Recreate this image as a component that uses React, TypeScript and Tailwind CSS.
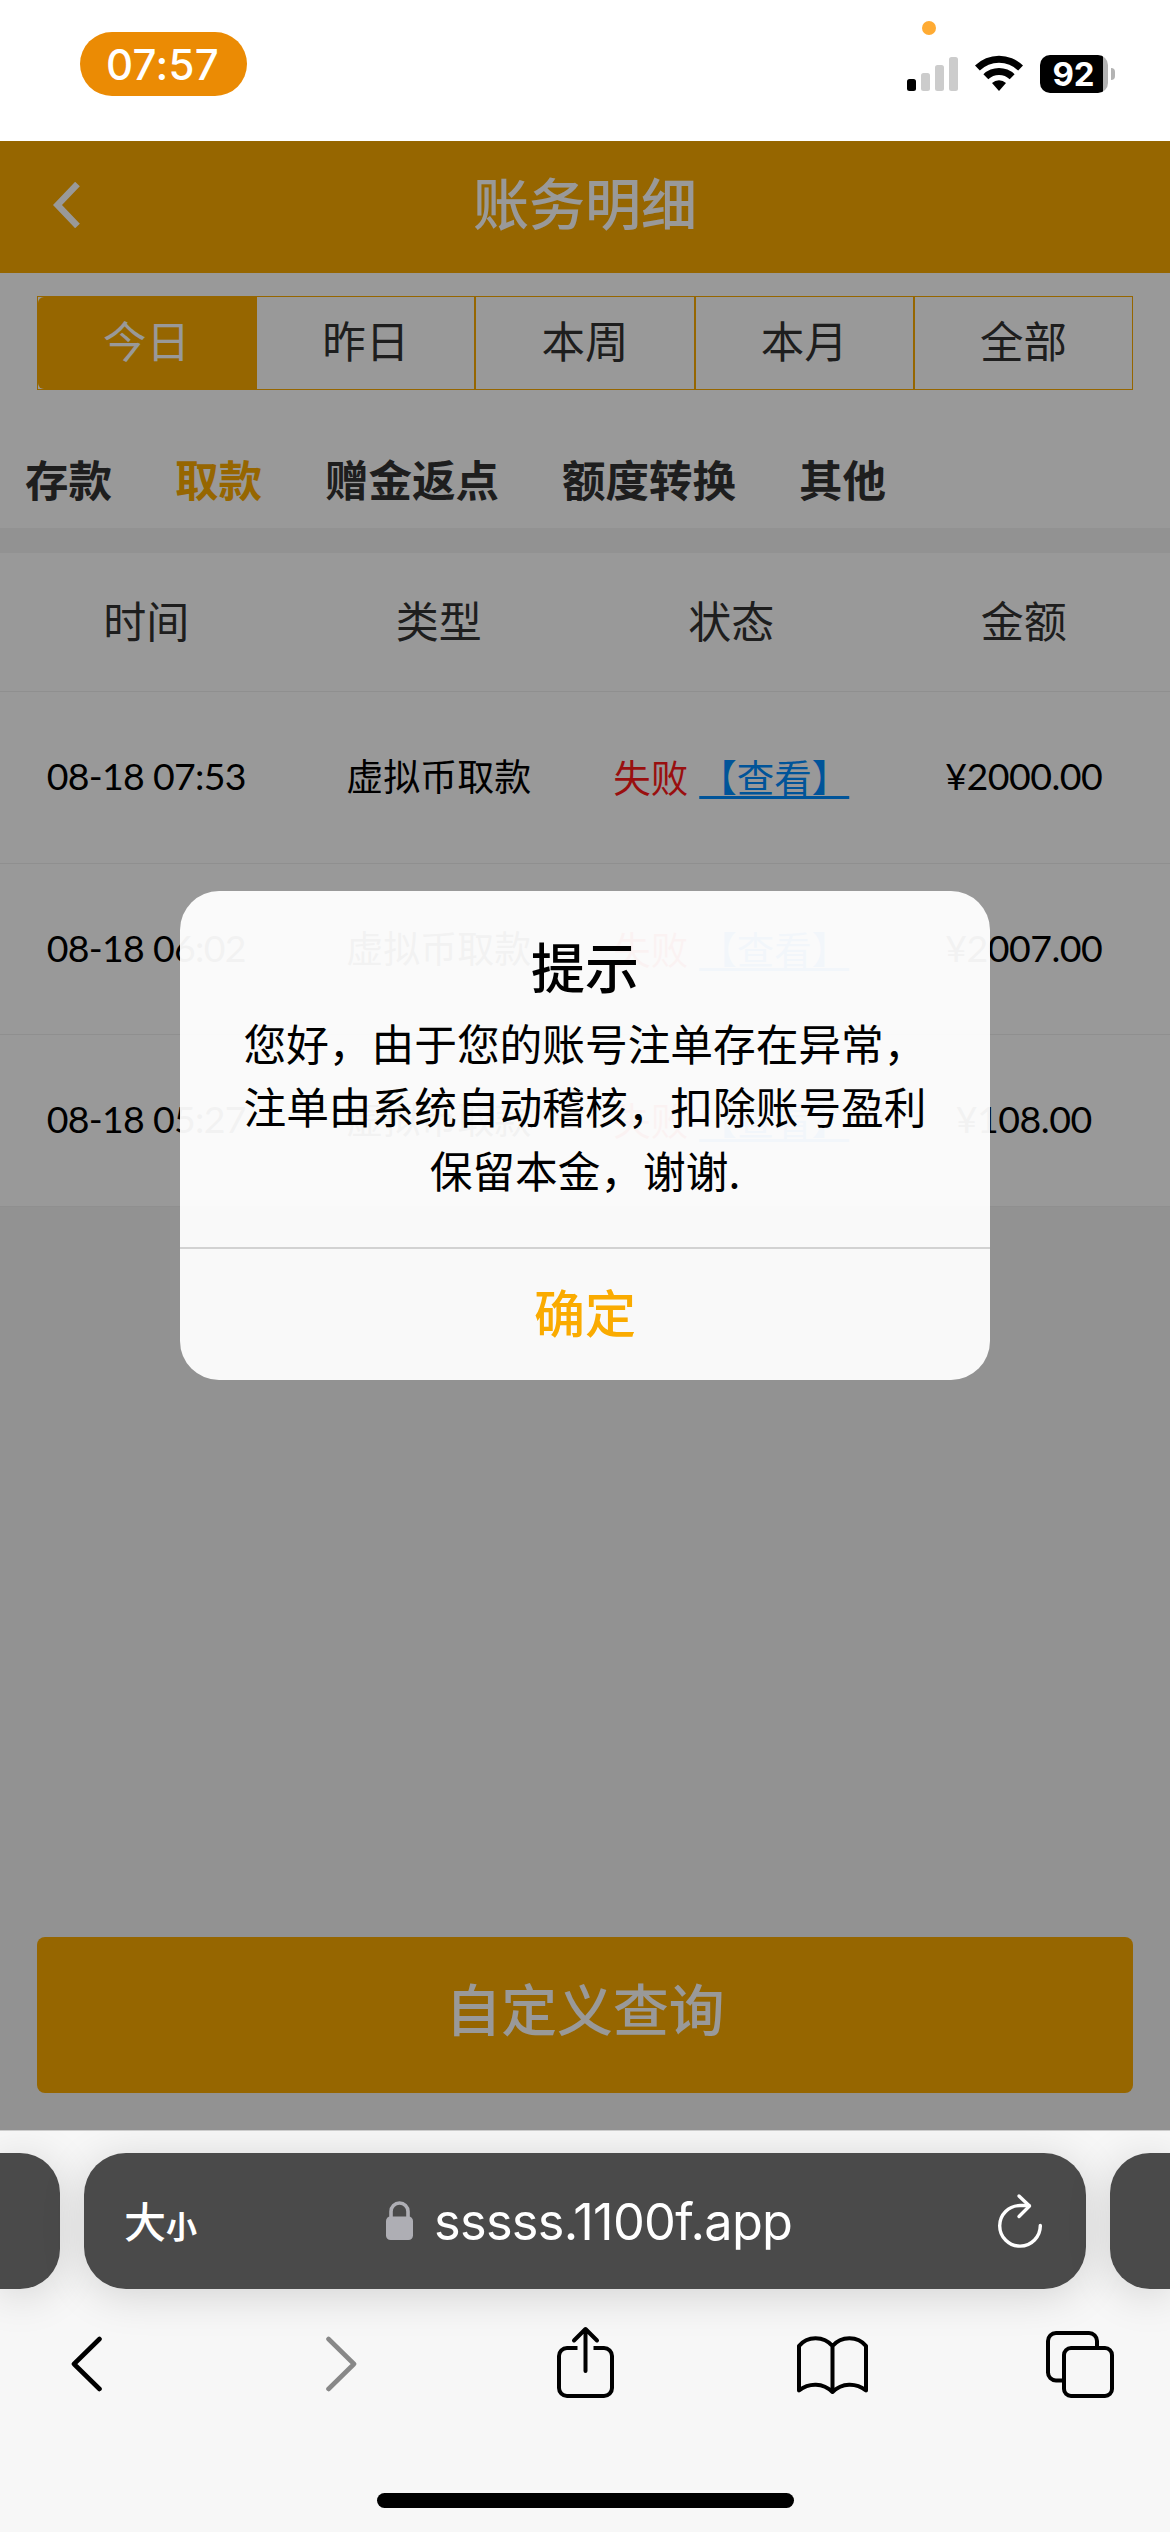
import type { ReactNode } from 'react'

const ranges = ['今日', '昨日', '本周', '本月', '全部']
const categories = ['存款', '取款', '赠金返点', '额度转换', '其他']
const columns = ['时间', '类型', '状态', '金额']

interface Record {
  time: string
  amount: string
}

const records: Record[] = [
  { time: '08-18 07:53', amount: '¥2000.00' },
  { time: '08-18 06:02', amount: '¥2007.00' },
  { time: '08-18 05:27', amount: '¥108.00' },
]

function StatusBar() {
  return (
    <div className="relative h-[141px] shrink-0 bg-white">
      <div className="flex items-start justify-between pl-20 pr-[55px] pt-8">
        <div className="flex h-16 w-[167px] items-center justify-center rounded-full bg-[#eb8b04] pr-[2px] font-['Inter'] text-[42px] font-medium tracking-[0.3px] text-white">
          07:57
        </div>
        <div className="flex items-start pt-[23px]">
          <svg width="51" height="36" viewBox="0 0 51 36" className="mr-[17px]">
            <rect x="0" y="24" width="9" height="12" rx="2.5" fill="#000" />
            <rect x="14" y="18" width="9" height="18" rx="2.5" fill="#ccc" />
            <rect x="28" y="10" width="9" height="26" rx="2.5" fill="#ccc" />
            <rect x="42" y="2" width="9" height="34" rx="2.5" fill="#ccc" />
          </svg>
          <svg width="48" height="36" viewBox="0 0 48 36" className="mr-[17px]">
            <path d="M0 10.6a34 34 0 0 1 48 0l-4.8 5a27.3 27.3 0 0 0-38.4 0z" />
            <path d="M8.4 19.3a22.3 22.3 0 0 1 31.2 0l-4.9 5a15.4 15.4 0 0 0-21.4 0z" />
            <path d="M17 28a10.3 10.3 0 0 1 14 0l-7 8z" />
          </svg>
          <div className="flex items-center">
            <div className="flex h-[38px] w-[68px] rounded-[10px] bg-[linear-gradient(90deg,#000_63px,#b3b3b3_63px)]">
              <span className="w-[67px] text-center font-['Inter'] text-[33px] font-bold leading-[38px] text-white">92</span>
            </div>
            <div className="ml-[3px] h-3 w-1 rounded-r-full bg-[#b3b3b3]" />
          </div>
        </div>
      </div>
      <div className="absolute left-[922px] top-[21px] size-[14px] rounded-full bg-[#ffab33]" />
    </div>
  )
}

function PageHeader() {
  return (
    <header className="flex h-[132px] items-center bg-[#faaa00] pb-1 pl-[53px] pr-[80px]">
      <svg width="27" height="46" viewBox="0 0 27 46" fill="none" stroke="#fff" strokeWidth="6.5">
        <path d="M24.5 2 4.5 23l20 21" />
      </svg>
      <h1 className="flex-1 pb-[8px] text-center text-[56px] font-medium leading-[60px] text-white">账务明细</h1>
    </header>
  )
}

function Filters() {
  return (
    <div className="bg-white pt-[23px]">
      <div className="mx-[37px] flex h-[94px]">
        {ranges.map((label, i) => (
          <div key={label} className="flex-1 border border-[#faaa00]">
            <div
              className={`flex h-full items-center justify-center pb-[7px] text-[43.5px] leading-none ${
                i === 0 ? 'rounded-l-[6px] bg-[#faaa00] text-white' : 'text-[#333]'
              }`}
            >
              {label}
            </div>
          </div>
        ))}
      </div>
      <div className="flex h-[138px] items-center gap-[63px] pb-[3px] pl-[25px] pt-[43px] text-[43.5px] font-bold leading-none">
        {categories.map((label, i) => (
          <span key={label} className={i === 1 ? 'text-[#faaa00]' : 'text-[#333]'}>
            {label}
          </span>
        ))}
      </div>
    </div>
  )
}

function Table() {
  return (
    <div className="mt-[25px] bg-white">
      <div className="grid h-[139px] grid-cols-4 items-center border-b border-[#eee] pb-[6px] text-center text-[43px] leading-none text-[#333]">
        {columns.map((c) => (
          <span key={c}>{c}</span>
        ))}
      </div>
      {records.map((r) => (
        <div
          key={r.time}
          className="grid h-[171.5px] grid-cols-4 items-center whitespace-nowrap border-b border-[#eee] pb-[3px] text-center font-['Lato','Noto_Sans_CJK_SC',sans-serif] text-[37.5px] leading-none text-black"
        >
          <span className="tracking-[-0.7px]">{r.time}</span>
          <span className="font-['Noto_Sans_CJK_SC',sans-serif] text-[37px]">虚拟币取款</span>
          <span className="font-['Noto_Sans_CJK_SC',sans-serif]">
            <span className="text-[#ff1a1a]">失败</span>
            <span className="ml-[11px] text-[#008cff] underline decoration-[3px] underline-offset-[4px]">【查看】</span>
          </span>
          <span className="tracking-[-0.5px]">{r.amount}</span>
        </div>
      ))}
    </div>
  )
}

interface DialogProps {
  title: string
  action: string
  children: ReactNode
}

function Dialog({ title, action, children }: DialogProps) {
  return (
    <div className="absolute inset-0 flex items-center justify-center bg-black/40">
      <div className="flex h-[489px] w-[810px] flex-col rounded-[39px] bg-white/95 text-center">
        <div className="flex-1 pt-[48px]">
          <h2 className="text-[54px] font-medium leading-[54px] text-black">{title}</h2>
          <p className="mt-[18px] text-[42.7px] leading-[63.3px] text-black">{children}</p>
        </div>
        <button className="h-[133px] border-t-2 border-[#d2d2d2] pb-[6px] text-[51px] font-medium leading-none text-[#faab00]">
          {action}
        </button>
      </div>
    </div>
  )
}

function Safari() {
  return (
    <div className="flex h-[402px] shrink-0 flex-col overflow-hidden border-t border-[#ccc] bg-[#f7f7f7]">
      <div className="mt-[22px] flex h-[136px] justify-between">
        <div className="w-[60px] rounded-r-[40px] bg-[#4a4a4a] shadow-[0_6px_44px_rgba(0,0,0,0.15)]" />
        <div className="flex w-[1002px] items-center rounded-[42px] bg-[#4a4a4a] pl-10 pr-[44px] text-white shadow-[0_6px_44px_rgba(0,0,0,0.15)]">
          <div className="flex w-[262px] items-baseline pb-[3px] leading-none">
            <span className="text-[42px] font-medium">大</span>
            <span className="text-[31px] font-bold">小</span>
          </div>
          <svg width="27" height="39" viewBox="0 0 27 39" className="mb-[1px] shrink-0">
            <path d="M5 18v-7.5a8.5 8.5 0 0 1 17 0V18" fill="none" stroke="#aeaeb4" strokeWidth="3.6" />
            <rect y="15.5" width="27" height="23.5" rx="4.5" fill="#aeaeb4" />
          </svg>
          <span className="ml-[21px] flex-1 whitespace-nowrap pt-[2px] font-['Inter'] text-[50.5px] leading-none tracking-[-0.7px]">sssss.1100f.app</span>
          <svg width="44" height="56" viewBox="0 0 44 56" fill="none" stroke="#fff" strokeWidth="3.4" strokeLinecap="round" strokeLinejoin="round">
            <path d="M42.3 32.5A20.3 20.3 0 1 1 22 12.500h9" />
            <path d="M21 3 31.500 13 21 23.500" />
          </svg>
        </div>
        <div className="w-[60px] rounded-l-[40px] bg-[#4a4a4a] shadow-[0_6px_44px_rgba(0,0,0,0.15)]" />
      </div>
      <div className="flex h-[150px] items-center pl-[71px] text-black">
        <svg width="31" height="56" viewBox="0 0 31 56" fill="none" stroke="currentColor" strokeWidth="4.6" strokeLinecap="round" strokeLinejoin="round">
          <path d="M28.500 3 3 28l25.500 25" />
        </svg>
        <svg width="31" height="56" viewBox="0 0 31 56" fill="none" stroke="#888" strokeWidth="4.6" strokeLinecap="round" strokeLinejoin="round" className="ml-56">
          <path d="m2.500 3 25.500 25L2.500 53" />
        </svg>
        <svg width="57" height="72" viewBox="0 0 57 72" fill="none" stroke="currentColor" strokeWidth="4" strokeLinejoin="round" className="mb-[4px] ml-[200px]">
          <path d="M20.500 22H10a8 8 0 0 0-8 8v32a8 8 0 0 0 8 8h37a8 8 0 0 0 8-8V30a8 8 0 0 0-8-8H36.500" />
          <path d="M28.500 3v42M17 14.500 28.500 3 40 14.500" strokeLinecap="round" />
        </svg>
        <svg width="71" height="59" viewBox="0 0 71 59" fill="none" stroke="currentColor" strokeWidth="4" strokeLinejoin="round" className="ml-[183px]">
          <path d="M35.500 11C27 .500 10 .500 2 11v44.500c10-8 24-8 33.500 1.500V11ZM35.500 11C44 .500 61 .500 69 11v44.500c-10-8-24-8-33.500 1.500" />
        </svg>
        <svg width="68" height="67" viewBox="0 0 68 67" fill="none" stroke="currentColor" strokeWidth="4" className="ml-[178px]">
          <rect x="18" y="17" width="48" height="48" rx="7" />
          <path d="M18 49.500H10a8 8 0 0 1-8-8V10a8 8 0 0 1 8-8h33a8 8 0 0 1 8 8v6" />
        </svg>
      </div>
      <div className="mx-auto mb-[24px] mt-auto h-[15px] w-[417px] rounded-full bg-black" />
    </div>
  )
}

export default function App() {
  return (
    <div className="flex h-[2532px] w-[1170px] flex-col overflow-hidden bg-white font-['Noto_Sans_CJK_SC',sans-serif]">
      <StatusBar />
      <main className="relative flex flex-1 flex-col bg-[#f4f4f4]">
        <PageHeader />
        <Filters />
        <Table />
        <button className="mx-[37px] mb-[37px] mt-auto h-[156px] rounded-[8px] bg-[#faaa00] pb-[16px] text-[55.8px] font-medium leading-none text-white">
          自定义查询
        </button>
        <Dialog title="提示" action="确定">
          您好，由于您的账号注单存在异常，
          <br />
          注单由系统自动稽核，扣除账号盈利
          <br />
          保留本金，谢谢.
        </Dialog>
      </main>
      <Safari />
    </div>
  )
}
